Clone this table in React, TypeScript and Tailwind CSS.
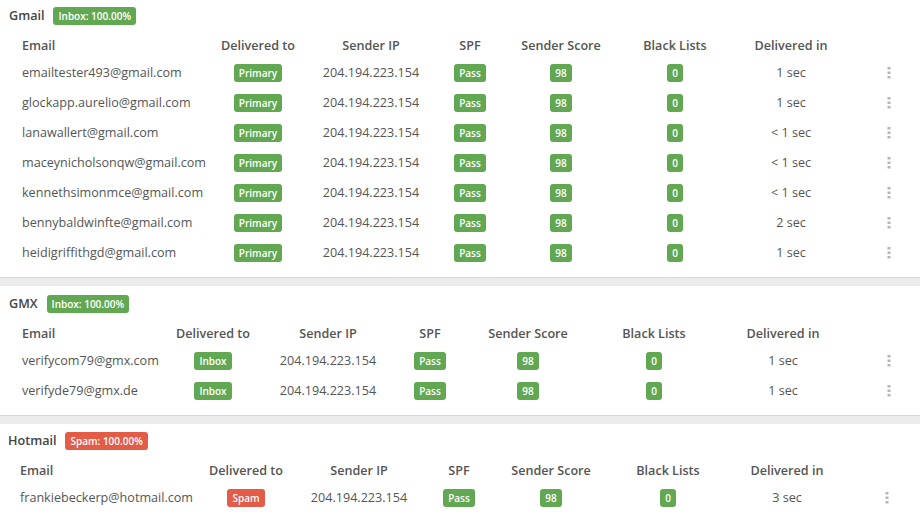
import React from "react"

type Row = {
  email: string
  folder: string
  time: string
}

type Section = {
  name: string
  badge: string
  spam: boolean
  pad: string
  titlePad: string
  tablePad: string
  cols: string[]
  rows: Row[]
}

const IP = "204.194.223.154"

const sections: Section[] = [
  {
    name: "Gmail",
    badge: "Inbox: 100.00%",
    spam: false,
    pad: "pt-[7px]",
    titlePad: "pl-[9px]",
    tablePad: "pl-[14px]",
    cols: ["w-[204px]", "w-[80px]", "w-[146px]", "w-[52px]", "w-[130px]", "w-[98px]", "w-[134px]", "w-[62px]"],
    rows: [
      { email: "emailtester493@gmail.com", folder: "Primary", time: "1 sec" },
      { email: "glockapp.aurelio@gmail.com", folder: "Primary", time: "1 sec" },
      { email: "lanawallert@gmail.com", folder: "Primary", time: "< 1 sec" },
      { email: "maceynicholsonqw@gmail.com", folder: "Primary", time: "< 1 sec" },
      { email: "kennethsimonmce@gmail.com", folder: "Primary", time: "< 1 sec" },
      { email: "bennybaldwinfte@gmail.com", folder: "Primary", time: "2 sec" },
      { email: "heidigriffithgd@gmail.com", folder: "Primary", time: "1 sec" },
    ],
  },
  {
    name: "GMX",
    badge: "Inbox: 100.00%",
    spam: false,
    pad: "pt-[9px]",
    titlePad: "pl-[9px]",
    tablePad: "pl-[14px]",
    cols: ["w-[159px]", "w-[80px]", "w-[150px]", "w-[54px]", "w-[142px]", "w-[110px]", "w-[148px]", "w-[63px]"],
    rows: [
      { email: "verifycom79@gmx.com", folder: "Inbox", time: "1 sec" },
      { email: "verifyde79@gmx.de", folder: "Inbox", time: "1 sec" },
    ],
  },
  {
    name: "Hotmail",
    badge: "Spam: 100.00%",
    spam: true,
    pad: "pt-[8px]",
    titlePad: "pl-[8px]",
    tablePad: "pl-[12px]",
    cols: ["w-[194px]", "w-[80px]", "w-[146px]", "w-[54px]", "w-[130px]", "w-[104px]", "w-[134px]", "w-[66px]"],
    rows: [{ email: "frankiebeckerp@hotmail.com", folder: "Spam", time: "3 sec" }],
  },
]

const headers = ["Email", "Delivered to", "Sender IP", "SPF", "Sender Score", "Black Lists", "Delivered in", ""]

function Badge({ children, red }: { children: React.ReactNode; red?: boolean }) {
  return (
    <span
      className={
        "inline-flex h-[18px] items-center rounded-[3px] px-[5px] text-[10px] font-semibold leading-none text-white " +
        (red ? "bg-[#e35c47]" : "bg-[#62a853]")
      }
    >
      {children}
    </span>
  )
}

function Dots() {
  return (
    <svg width="4" height="12" viewBox="0 0 4 12" className="mx-auto block">
      <rect x="0.5" y="0" width="3" height="2.5" fill="#b5b5b5" />
      <rect x="0.5" y="4.5" width="3" height="2.5" fill="#b5b5b5" />
      <rect x="0.5" y="9" width="3" height="2.5" fill="#b5b5b5" />
    </svg>
  )
}

function ResultCard({ s, last }: { s: Section; last: boolean }) {
  return (
    <>
      <div className={"bg-white pb-[9px] " + s.pad + (last ? "" : " border-b border-[#d8d8d8]")}>
        <div className={"flex h-[18px] items-center gap-[9px] " + s.titlePad}>
          <span className="text-[12.6px] font-semibold text-[#444]">{s.name}</span>
          <span
            className={
              "inline-flex h-[18px] items-center rounded-[3px] px-[5px] text-[10px] font-semibold leading-none text-white " +
              (s.spam ? "bg-[#e35c47]" : "bg-[#62a853]")
            }
          >
            {s.badge}
          </span>
        </div>
        <div className={"mt-[9px] " + s.tablePad}>
          <table className="table-fixed border-collapse text-[12.6px] text-[#555]">
            <thead>
              <tr className="h-[24px]">
                {headers.map((h, i) => (
                  <th
                    key={i}
                    className={
                      s.cols[i] +
                      " p-0 font-semibold text-[#555] " +
                      (i === 0 ? "pl-2 text-left" : "text-center")
                    }
                  >
                    {h}
                  </th>
                ))}
              </tr>
            </thead>
            <tbody>
              {s.rows.map((r) => (
                <tr key={r.email} className="h-[30px]">
                  <td className="whitespace-nowrap p-0 pl-2 text-left">{r.email}</td>
                  <td className="p-0 text-center">
                    <Badge red={s.spam}>{r.folder}</Badge>
                  </td>
                  <td className="p-0 text-center">{IP}</td>
                  <td className="p-0 text-center">
                    <Badge>Pass</Badge>
                  </td>
                  <td className="p-0 text-center">
                    <Badge>98</Badge>
                  </td>
                  <td className="p-0 text-center">
                    <Badge>0</Badge>
                  </td>
                  <td className="p-0 text-center">{r.time}</td>
                  <td className="p-0 text-center">
                    <Dots />
                  </td>
                </tr>
              ))}
            </tbody>
          </table>
        </div>
      </div>
      {!last && <div className="h-[8px] bg-[#ebebeb]" />}
    </>
  )
}

export default function App() {
  return (
    <div className="h-[522px] w-[920px] overflow-hidden bg-white font-['Open_Sans',sans-serif]">
      {sections.map((s, i) => (
        <ResultCard key={s.name} s={s} last={i === sections.length - 1} />
      ))}
    </div>
  )
}
